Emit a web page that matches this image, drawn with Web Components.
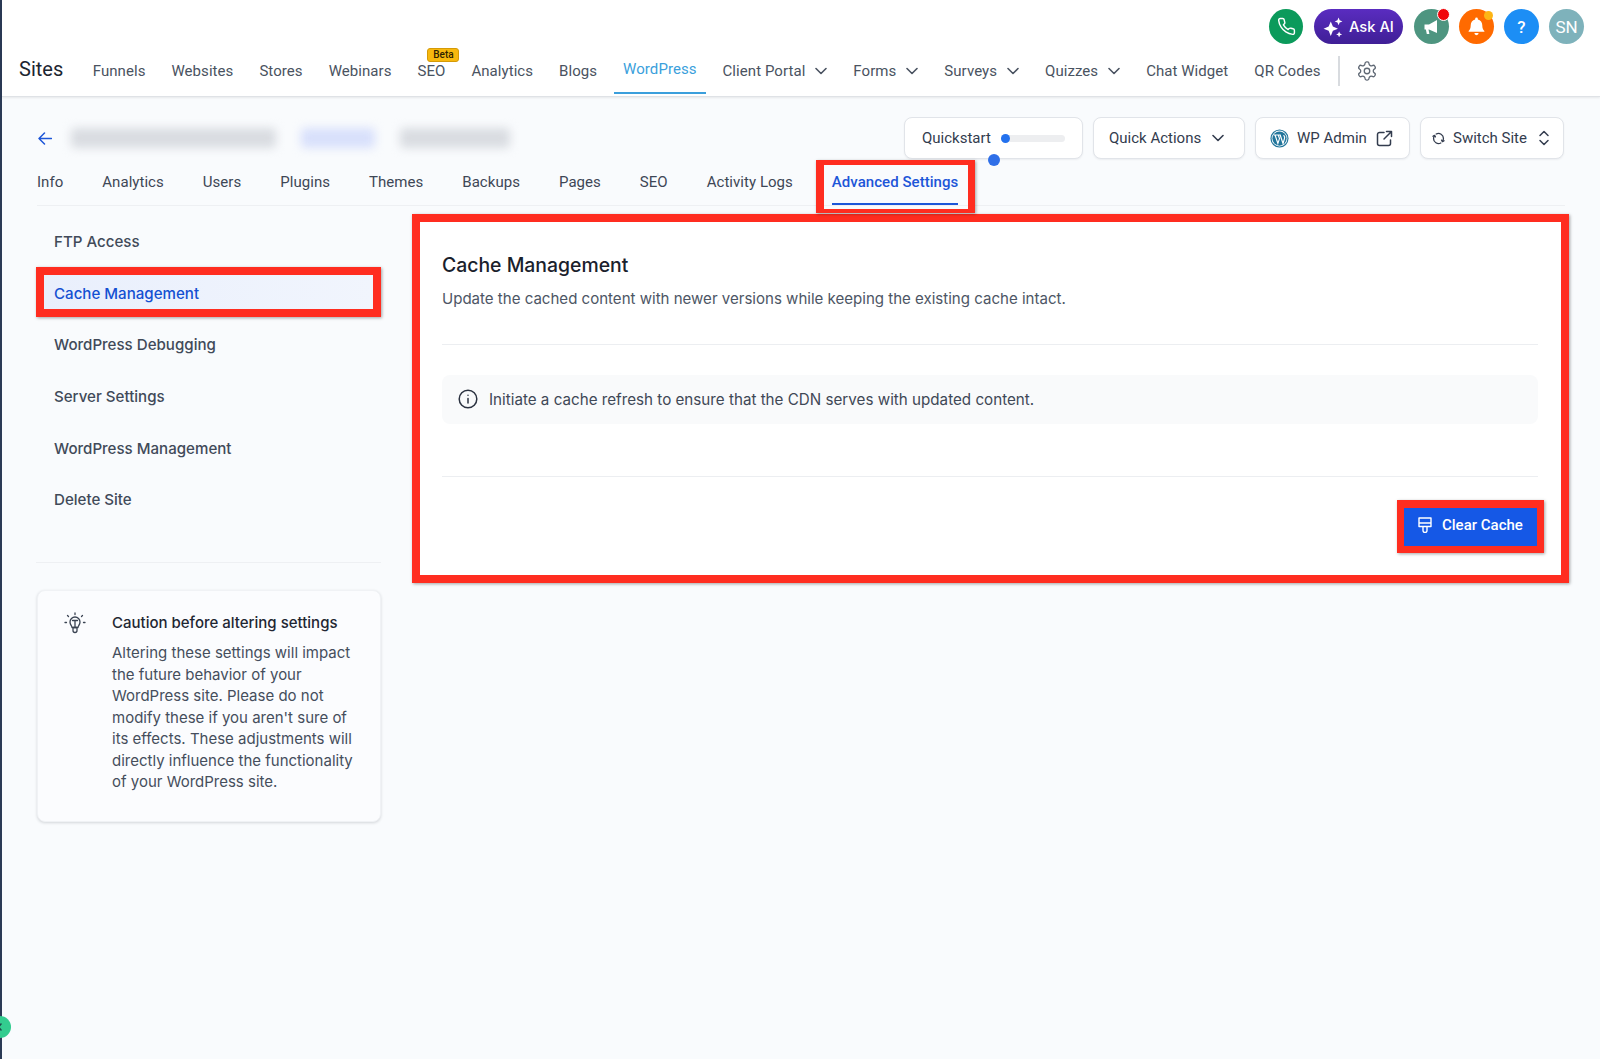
<!DOCTYPE html>
<html lang="en">
<head>
<meta charset="utf-8">
<title>Sites - Advanced Settings</title>
<style>
  html, body { margin: 0; height: 100%; }
  body { background: #f9fbfd; font-family: "Inter", "Liberation Sans", sans-serif; overflow: hidden; }
  #app { min-height: 1059px; box-sizing: border-box; border-left: 2px solid #2b3a55; }
</style>
</head>
<body>
<div id="app">
  <top-header>
    <nav-item>Funnels</nav-item>
    <nav-item>Websites</nav-item>
    <nav-item>Stores</nav-item>
    <nav-item>Webinars</nav-item>
    <nav-item badge="Beta">SEO</nav-item>
    <nav-item>Analytics</nav-item>
    <nav-item>Blogs</nav-item>
    <nav-item active>WordPress</nav-item>
    <nav-item caret>Client Portal</nav-item>
    <nav-item caret>Forms</nav-item>
    <nav-item caret>Surveys</nav-item>
    <nav-item caret>Quizzes</nav-item>
    <nav-item>Chat Widget</nav-item>
    <nav-item>QR Codes</nav-item>
  </top-header>
  <site-toolbar></site-toolbar>
  <site-tabs>
    <site-tab>Info</site-tab>
    <site-tab>Analytics</site-tab>
    <site-tab>Users</site-tab>
    <site-tab>Plugins</site-tab>
    <site-tab>Themes</site-tab>
    <site-tab>Backups</site-tab>
    <site-tab>Pages</site-tab>
    <site-tab>SEO</site-tab>
    <site-tab>Activity Logs</site-tab>
    <site-tab active>Advanced Settings</site-tab>
  </site-tabs>
  <settings-layout>
    <settings-sidebar slot="side">
      <menu-item>FTP Access</menu-item>
      <menu-item active>Cache Management</menu-item>
      <menu-item>WordPress Debugging</menu-item>
      <menu-item>Server Settings</menu-item>
      <menu-item>WordPress Management</menu-item>
      <menu-item>Delete Site</menu-item>
      <caution-card slot="card" heading="Caution before altering settings">Altering these settings will impact the future behavior of your WordPress site. Please do not modify these if you aren't sure of its effects. These adjustments will directly influence the functionality of your WordPress site.</caution-card>
    </settings-sidebar>
    <cache-panel></cache-panel>
  </settings-layout>
</div>
<help-bubble></help-bubble>

<script>
const ROBOTO = `"Roboto", "Liberation Sans", sans-serif`;
const INTER = `"Inter", "Liberation Sans", sans-serif`;
const CHEVRON = `<svg width="12" height="8" viewBox="0 0 12 8" fill="none" stroke="currentColor" stroke-width="1.6" stroke-linecap="round" stroke-linejoin="round"><path d="M1 1.5l5 5 5-5"/></svg>`;

class TopHeader extends HTMLElement {
  constructor() {
    super();
    this.attachShadow({ mode: 'open' });
    this.shadowRoot.innerHTML = `
      <style>
        :host {
          display: block;
          height: 97px;
          box-sizing: border-box;
          background: #fff;
          border-bottom: 1px solid #dfe2e6;
          box-shadow: 0 1px 2px rgba(0, 0, 0, .08);
          font-family: ${ROBOTO};
        }
        .actions {
          display: flex;
          justify-content: flex-end;
          gap: 10px;
          height: 35px;
          padding: 9px 16px 0 0;
        }
        .round {
          position: relative;
          width: 35px;
          height: 35px;
          border-radius: 50%;
          display: flex;
          align-items: center;
          justify-content: center;
          color: #fff;
          font-size: 17px;
        }
        .round i {
          position: absolute;
          border-radius: 50%;
        }
        .ask {
          display: flex;
          align-items: center;
          gap: 6px;
          width: 89px;
          height: 35px;
          margin: 0 1px;
          box-sizing: border-box;
          padding-left: 9px;
          border-radius: 18px;
          color: #fff;
          font: 500 14.7px ${INTER};
          background: linear-gradient(180deg, #5a2cc0, #3f1f96);
        }
        .nav {
          display: flex;
          align-items: stretch;
          height: 48px;
          margin-top: 2px;
          padding-left: 17px;
        }
        .brand {
          font-size: 20px;
          color: #1c2530;
          line-height: 47px;
          margin-right: 20.5px;
        }
        slot {
          display: flex;
          gap: 8px;
        }
        .sep {
          width: 2px;
          height: 30px;
          margin: 10px 0 0 8.5px;
          background: #d8dbdf;
        }
        .gear {
          margin: 14px 0 0 16px;
          color: #5f6874;
        }
      </style>
      <div class="actions">
        <div class="round" style="background:#0b9a5b; width:34px">
          <svg width="19" height="19" viewBox="0 0 24 24" fill="none" stroke="#fff" stroke-width="1.8" stroke-linecap="round" stroke-linejoin="round"><path d="M22 16.92v3a2 2 0 0 1-2.18 2 19.79 19.79 0 0 1-8.63-3.07 19.5 19.5 0 0 1-6-6 19.79 19.79 0 0 1-3.07-8.67A2 2 0 0 1 4.11 2h3a2 2 0 0 1 2 1.72 12.84 12.84 0 0 0 .7 2.81 2 2 0 0 1-.45 2.11L8.09 9.91a16 16 0 0 0 6 6l1.27-1.27a2 2 0 0 1 2.11-.45 12.84 12.84 0 0 0 2.81.7A2 2 0 0 1 22 16.92z"/></svg>
        </div>
        <div class="ask">
          <svg width="20" height="20" viewBox="2 1.5 18 18" fill="#fff"><path d="M9 5.5l1.9 4.6L15.5 12l-4.6 1.9L9 18.5l-1.9-4.6L2.5 12l4.6-1.9z"/><path d="M16 2l1 2.5 2.5 1-2.5 1-1 2.5-1-2.5-2.5-1 2.5-1z"/><path d="M16.5 14.5l.8 1.9 1.9.8-1.9.8-.8 1.9-.8-1.9-1.9-.8 1.9-.8z"/></svg>
          <span>Ask AI</span>
        </div>
        <div class="round" style="background:#4e9580">
          <svg width="20" height="20" viewBox="0 0 20 20" fill="#fff"><path d="M2.5 7.5H7l8-4.5v13l-8-3.5H6.5l.9 4.5H4.800l-.9-4.500H2.500z"/></svg>
          <i style="width:11px;height:11px;top:-1px;right:-1px;background:#f0060b;border:1.5px solid #fff"></i>
        </div>
        <div class="round" style="background:#ff6a00">
          <svg width="21" height="21" viewBox="0 0 20 20" fill="#fff"><path d="M10 1.500a1.300 1.300 0 0 1 1.300 1.300v.5c2.600.6 4.200 2.800 4.200 5.500 0 3 .8 4.300 2 5.400v.8h-15v-.8c1.200-1.100 2-2.400 2-5.400 0-2.700 1.600-4.900 4.200-5.500v-.5A1.300 1.300 0 0 1 10 1.500z"/><path d="M8 16.300h4a2 2 0 0 1-4 0z"/></svg>
          <i style="width:9px;height:9px;top:2px;right:1px;background:#fdb515"></i>
        </div>
        <div class="round" style="background:#1c8ef5; font-weight:500">?</div>
        <div class="round" style="background:#7eb2bb">SN</div>
      </div>
      <div class="nav">
        <span class="brand">Sites</span>
        <slot></slot>
        <span class="sep"></span>
        <svg class="gear" width="22" height="22" viewBox="0 0 24 24" fill="none" stroke="currentColor" stroke-width="1.4" stroke-linecap="round" stroke-linejoin="round"><path d="M12.22 2h-.44a2 2 0 0 0-2 2v.18a2 2 0 0 1-1 1.73l-.43.25a2 2 0 0 1-2 0l-.15-.08a2 2 0 0 0-2.73.73l-.22.38a2 2 0 0 0 .73 2.73l.15.1a2 2 0 0 1 1 1.72v.51a2 2 0 0 1-1 1.74l-.15.09a2 2 0 0 0-.73 2.73l.22.38a2 2 0 0 0 2.73.73l.15-.08a2 2 0 0 1 2 0l.43.25a2 2 0 0 1 1 1.73V20a2 2 0 0 0 2 2h.44a2 2 0 0 0 2-2v-.18a2 2 0 0 1 1-1.73l.43-.25a2 2 0 0 1 2 0l.15.08a2 2 0 0 0 2.73-.73l.22-.39a2 2 0 0 0-.73-2.73l-.15-.08a2 2 0 0 1-1-1.74v-.5a2 2 0 0 1 1-1.74l.15-.09a2 2 0 0 0 .73-2.73l-.22-.38a2 2 0 0 0-2.73-.73l-.15.08a2 2 0 0 1-2 0l-.43-.25a2 2 0 0 1-1-1.73V4a2 2 0 0 0-2-2z"/><circle cx="12" cy="12" r="3"/></svg>
      </div>
    `;
  }
}

class NavItem extends HTMLElement {
  constructor() {
    super();
    this.attachShadow({ mode: 'open' });
    this.shadowRoot.innerHTML = `
      <style>
        :host {
          position: relative;
          display: flex;
          align-items: center;
          gap: 10px;
          height: 48px;
          box-sizing: border-box;
          padding: 2px 9px 0;
          color: #4a5361;
          font-size: 15px;
          letter-spacing: .06px;
          white-space: nowrap;
        }
        :host([active]) {
          color: #3b9fdc;
          border-bottom: 2px solid #3b9fdc;
          padding-top: 0;
        }
        .badge {
          position: absolute;
          top: 2px;
          left: 19px;
          width: 32px;
          height: 14px;
          box-sizing: border-box;
          border: 1px solid #d59a06;
          border-radius: 3px;
          background: #f7b80e;
          color: #2e2200;
          font-size: 10px;
          font-weight: 500;
          letter-spacing: 0;
          line-height: 12px;
          text-align: center;
        }
      </style>
      <slot></slot>
    `;
  }

  connectedCallback() {
    if (this.hasAttribute('caret')) {
      const caret = document.createElement('span');
      caret.style.display = 'flex';
      caret.innerHTML = CHEVRON;
      this.shadowRoot.appendChild(caret);
    }
    if (this.hasAttribute('badge')) {
      const badge = document.createElement('span');
      badge.className = 'badge';
      badge.textContent = this.getAttribute('badge');
      this.shadowRoot.appendChild(badge);
    }
  }
}

class SiteToolbar extends HTMLElement {
  constructor() {
    super();
    this.attachShadow({ mode: 'open' });
    this.shadowRoot.innerHTML = `
      <style>
        :host {
          display: flex;
          align-items: center;
          height: 42px;
          margin-top: 20px;
          padding: 0 36px;
          font-family: ${ROBOTO};
        }
        .back { color: #1d56d8; margin-right: 19px; display: flex; }
        .blur { height: 20px; border-radius: 4px; filter: blur(5px); background: #d9dce1; }
        .spacer { flex: 1; }
        .btn {
          position: relative;
          display: flex;
          align-items: center;
          box-sizing: border-box;
          height: 42px;
          margin-left: 10px;
          border: 1px solid #e1e4e9;
          border-radius: 8px;
          background: #fff;
          box-shadow: 0 1px 2px rgba(16, 24, 40, .06);
          color: #333c4e;
          font-size: 15px;
          white-space: nowrap;
        }
        .track { width: 64px; height: 7px; margin-left: 10px; border-radius: 4px; background: #edeef0; position: relative; }
        .track i { position: absolute; left: 0; top: -1px; width: 9px; height: 9px; border-radius: 50%; background: #2371ee; }
        .dot { position: absolute; left: 83px; top: 36px; width: 12px; height: 12px; border-radius: 50%; background: #2f6fe8; }
      </style>
      <span class="back">
        <svg width="14" height="13" viewBox="0 0 14 13" fill="none" stroke="currentColor" stroke-width="1.5" stroke-linecap="round" stroke-linejoin="round"><path d="M13.5 6.5H1M6.5 1L1 6.5 6.5 12"/></svg>
      </span>
      <span class="blur" style="width:205px"></span>
      <span class="blur" style="width:74px; margin-left:25px; background:#d8e0fb"></span>
      <span class="blur" style="width:110px; margin-left:25px"></span>
      <span class="spacer"></span>
      <div class="btn" style="width:179px; padding-left:17px; margin-left:0">
        Quickstart
        <span class="track"><i></i></span>
        <span class="dot"></span>
      </div>
      <div class="btn" style="width:152px; padding-left:15px; gap:11px">
        Quick Actions ${CHEVRON}
      </div>
      <div class="btn" style="width:155px; padding-left:14px; gap:8px">
        <svg width="19" height="19" viewBox="0 0 20 20"><circle cx="10" cy="10" r="9.5" fill="#21759b"/><circle cx="10" cy="10" r="8.3" fill="#fff"/><circle cx="10" cy="10" r="7.5" fill="#21759b"/><path d="M4 6.3h3.600M5.300 6.300l3 9 1.700-5.200-1.300-3.800M7.600 6.300h3.600M10.700 6.300l3 9 1.500-5c.5-1.500-.2-3-.9-3.800" fill="none" stroke="#fff" stroke-width="1.2"/></svg>
        WP Admin
        <svg width="17" height="17" viewBox="0 0 17 17" fill="none" stroke="currentColor" stroke-width="1.5" stroke-linecap="round" stroke-linejoin="round" style="margin-left:1px"><path d="M8 2.500H3.500a2 2 0 0 0-2 2v9a2 2 0 0 0 2 2h9a2 2 0 0 0 2-2V10M10.500 1.500h5v5M15.500 1.500L8 9"/></svg>
      </div>
      <div class="btn" style="width:144px; padding-left:11px; gap:8px">
        <svg width="13" height="13" viewBox="0 0 14 14" fill="none" stroke="currentColor" stroke-width="1.4" stroke-linecap="round" stroke-linejoin="round"><path d="M4.500 2.200A5.300 5.300 0 0 1 12.300 7a5.300 5.300 0 0 1-1 3"/><path d="M9.500 11.800A5.300 5.300 0 0 1 1.700 7a5.300 5.300 0 0 1 1-3"/><path d="M1 4.600l1.700-1 1 1.700M13 9.400l-1.700 1-1-1.700"/></svg>
        Switch Site
        <svg width="12" height="16" viewBox="0 0 12 16" fill="none" stroke="currentColor" stroke-width="1.5" stroke-linecap="round" stroke-linejoin="round" style="margin-left:3px"><path d="M2 5.500L6 1.500l4 4M2 10.500l4 4 4-4"/></svg>
      </div>
    `;
  }
}

class SiteTabs extends HTMLElement {
  constructor() {
    super();
    this.attachShadow({ mode: 'open' });
    this.shadowRoot.innerHTML = `
      <style>
        :host {
          display: flex;
          gap: 39px;
          height: 43px;
          margin: 3px 35px 0 35px;
          border-bottom: 1px solid #eef0f3;
          font-family: ${ROBOTO};
        }
      </style>
      <slot></slot>
    `;
  }
}

class SiteTab extends HTMLElement {
  constructor() {
    super();
    this.attachShadow({ mode: 'open' });
    this.shadowRoot.innerHTML = `
      <style>
        :host {
          position: relative;
          display: block;
          height: 43px;
          box-sizing: border-box;
          color: #3e4756;
          font-size: 15px;
          letter-spacing: .04px;
          line-height: 41px;
          white-space: nowrap;
        }
        :host([active]) {
          color: #1d56d8;
          font-weight: 500;
          border-bottom: 2px solid #1d56d8;
        }
        :host([active]) .mark {
          position: absolute;
          inset: -2px -17px -10px -16px;
          border: solid #ff2d20;
          border-width: 5px 7px 4px 8px;
          box-shadow: 1px 1px 3px rgba(0, 0, 0, .35);
          pointer-events: none;
        }
      </style>
      <slot></slot>
      <span class="mark"></span>
    `;
  }
}

class SettingsLayout extends HTMLElement {
  constructor() {
    super();
    this.attachShadow({ mode: 'open' });
    this.shadowRoot.innerHTML = `
      <style>
        :host {
          display: flex;
          align-items: flex-start;
          gap: 31px;
          padding: 8px 31px 0 34px;
        }
        ::slotted(cache-panel) { flex: 1; }
      </style>
      <slot name="side"></slot>
      <slot></slot>
    `;
  }
}

class SettingsSidebar extends HTMLElement {
  constructor() {
    super();
    this.attachShadow({ mode: 'open' });
    this.shadowRoot.innerHTML = `
      <style>
        :host {
          display: block;
          width: 345px;
          flex: none;
          padding-top: 3px;
        }
        .list {
          display: flex;
          flex-direction: column;
          gap: 1.7px;
          height: 346px;
          box-sizing: border-box;
          border-bottom: 1px solid #eef0f3;
        }
        .card { margin-top: 26.5px; }
      </style>
      <div class="list"><slot></slot></div>
      <div class="card"><slot name="card"></slot></div>
    `;
  }
}

class MenuItem extends HTMLElement {
  constructor() {
    super();
    this.attachShadow({ mode: 'open' });
    this.shadowRoot.innerHTML = `
      <style>
        :host {
          display: block;
          height: 50px;
          box-sizing: border-box;
          padding-left: 18px;
          color: #414a59;
          font: 500 15.1px/50px ${INTER};
        }
        :host([active]) {
          margin: -1.7px 0 1.7px;
          padding-left: 10px;
          border: 8px solid #ff2d20;
          line-height: 37.5px;
          color: #1450d2;
          background: linear-gradient(90deg, #e9effc, #f1f5fd);
          box-shadow: 1px 1px 3px rgba(0, 0, 0, .35);
        }
      </style>
      <slot></slot>
    `;
  }
}

class CautionCard extends HTMLElement {
  constructor() {
    super();
    this.attachShadow({ mode: 'open' });
    this.shadowRoot.innerHTML = `
      <style>
        :host {
          display: flex;
          box-sizing: border-box;
          height: 232px;
          margin: 0 0 0 1px;
          padding: 21.5px 22px 0 26px;
          border: 1px solid #f0f2f5;
          border-radius: 8px;
          background: #fbfcfe;
          box-shadow: 0 1px 3px rgba(16, 24, 40, .16);
          font-family: ${INTER};
        }
        svg { flex: none; margin-right: 26px; color: #3a4352; }
        h3 { margin: 0 0 8px; color: #1f2733; font-size: 15px; font-weight: 500; line-height: 22px; }
        p { margin: 0; color: #454e5c; font-size: 15px; line-height: 21.5px; }
      </style>
      <svg width="22" height="22" viewBox="0 0 22 22" fill="none" stroke="currentColor" stroke-width="1.3" stroke-linecap="round" stroke-linejoin="round"><path d="M8 15.500c0-1.500-2-2.500-2-5.500a5 5 0 0 1 10 0c0 3-2 4-2 5.500z"/><path d="M8.500 8.500h5M11 8.500v7M9 18.500v-3h4v3a2 2 0 0 1-4 0z"/><path d="M11 1v1.500M3.500 3.500l1 1M18.500 3.500l-1 1M1 10.500h1.500M19.500 10.500H21"/></svg>
      <div>
        <h3>${this.getAttribute('heading') || ''}</h3>
        <p><slot></slot></p>
      </div>
    `;
  }
}

class CachePanel extends HTMLElement {
  constructor() {
    super();
    this.attachShadow({ mode: 'open' });
    this.shadowRoot.innerHTML = `
      <style>
        :host {
          display: block;
          box-sizing: border-box;
          height: 369px;
          padding: 29px 23px 0 22px;
          border: 8px solid #ff2d20;
          background: #fff;
          box-shadow: 1px 1px 3px rgba(0, 0, 0, .35);
          font-family: ${INTER};
        }
        h2 { margin: 0; color: #1a212c; font-size: 19.4px; font-weight: 500; line-height: 28px; }
        .sub { margin: 9px 0 0; color: #4d5665; font-size: 15.05px; line-height: 22px; }
        hr { margin: 0; border: 0; border-top: 1px solid #eceef1; }
        .callout {
          display: flex;
          align-items: center;
          gap: 11px;
          height: 49px;
          margin: 30px 0 52px;
          padding-left: 16px;
          box-sizing: border-box;
          border-radius: 8px;
          background: #f9fafb;
          color: #3f4856;
          font-size: 15.2px;
        }
        .foot { display: flex; justify-content: flex-end; margin-top: 31px; padding-right: 1px; }
        .clear {
          position: relative;
          display: flex;
          align-items: center;
          gap: 10px;
          height: 38px;
          width: 133px;
          box-sizing: border-box;
          padding: 0 0 4px 14px;
          background: #1558e6;
          color: #fff;
          font: 500 15px ${ROBOTO};
          white-space: nowrap;
        }
        .clear::after {
          content: "";
          position: absolute;
          inset: -8px -7px -7px;
          border: solid #ff2d20;
          border-width: 8px 7px 7px;
          box-shadow: 1px 1px 3px rgba(0, 0, 0, .35);
        }
      </style>
      <h2>Cache Management</h2>
      <p class="sub">Update the cached content with newer versions while keeping the existing cache intact.</p>
      <hr style="margin-top:33.5px">
      <div class="callout">
        <svg width="20" height="20" viewBox="0 0 20 20" fill="none" stroke="#2b3240" stroke-width="1.5" stroke-linecap="round"><circle cx="10" cy="10" r="8.8"/><path d="M10 9.500v4.500M10 6.200v.1"/></svg>
        Initiate a cache refresh to ensure that the CDN serves with updated content.
      </div>
      <hr>
      <div class="foot">
        <div class="clear">
          <svg width="14" height="16" viewBox="0 0 14 16" fill="none" stroke="#fff" stroke-width="1.4" stroke-linejoin="round"><path d="M1 1h12v8.500H1zM1 6h12M5 9.500v4a2 2 0 0 0 4 0v-4"/></svg>
          Clear Cache
        </div>
      </div>
    `;
  }
}

class HelpBubble extends HTMLElement {
  constructor() {
    super();
    this.attachShadow({ mode: 'open' });
    this.shadowRoot.innerHTML = `
      <style>
        :host {
          position: fixed;
          left: -11px;
          top: 1016px;
          width: 22px;
          height: 22px;
          border-radius: 50%;
          background: #33cc8f;
          display: flex;
          align-items: center;
          justify-content: flex-end;
        }
        svg { margin-right: 9px; }
      </style>
      <svg width="4" height="8" viewBox="0 0 4 8" fill="none" stroke="#1f4a4a" stroke-width="1.5"><path d="M3.5 .5L.5 4l3 3.5"/></svg>
    `;
  }
}

customElements.define('top-header', TopHeader);
customElements.define('nav-item', NavItem);
customElements.define('site-toolbar', SiteToolbar);
customElements.define('site-tabs', SiteTabs);
customElements.define('site-tab', SiteTab);
customElements.define('settings-layout', SettingsLayout);
customElements.define('settings-sidebar', SettingsSidebar);
customElements.define('menu-item', MenuItem);
customElements.define('caution-card', CautionCard);
customElements.define('cache-panel', CachePanel);
customElements.define('help-bubble', HelpBubble);
</script>
</body>
</html>
